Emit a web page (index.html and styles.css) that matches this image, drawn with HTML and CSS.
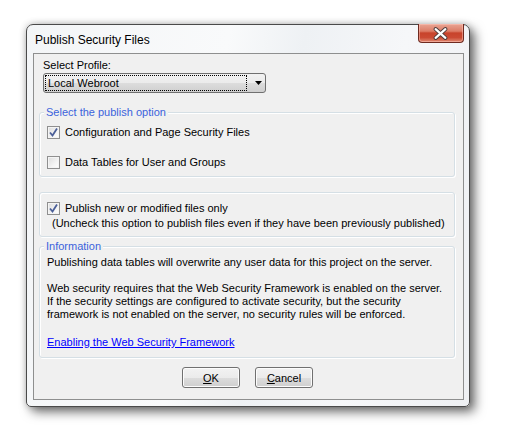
FILE: index.html
```html
<!DOCTYPE html>
<html>
<head>
<meta charset="utf-8">
<link rel="stylesheet" href="styles.css">
</head>
<body>
<div class="desktop">
  <div class="window">
    <div class="titlebar">
      <span class="title">Publish Security Files</span>
      <div class="close">
        <svg width="46" height="19" viewBox="0 0 46 19">
          <path d="M18 5 L28 14 M28 5 L18 14" stroke="#4a3a3a" stroke-width="4.2" stroke-linecap="round"/>
          <path d="M18 5 L28 14 M28 5 L18 14" stroke="#ffffff" stroke-width="2.2" stroke-linecap="round"/>
        </svg>
      </div>
    </div>
    <div class="client">
      <div class="label">Select Profile:</div>
      <div class="combo">
        <span class="combo-text">Local Webroot</span>
        <svg class="combo-arrow" width="7" height="4" viewBox="0 0 7 4"><path d="M0 0 H7 L3.5 4 Z" fill="#000"/></svg>
      </div>

      <div class="group g1">
        <div class="legend">Select the publish option</div>
        <div class="check-row r1">
          <span class="checkbox checked">
            <svg width="11" height="11" viewBox="0 0 11 11"><path d="M2 5.5 L4.5 8.5 L9 1.5" stroke="#4b5f98" stroke-width="1.8" fill="none"/></svg>
          </span>
          <span>Configuration and Page Security Files</span>
        </div>
        <div class="check-row r2">
          <span class="checkbox"></span>
          <span>Data Tables for User and Groups</span>
        </div>
      </div>

      <div class="group g2">
        <div class="check-row r3">
          <span class="checkbox checked">
            <svg width="11" height="11" viewBox="0 0 11 11"><path d="M2 5.5 L4.5 8.5 L9 1.5" stroke="#4b5f98" stroke-width="1.8" fill="none"/></svg>
          </span>
          <span>Publish new or modified files only</span>
        </div>
        <div class="note">(Uncheck this option to publish files even if they have been previously published)</div>
      </div>

      <div class="group g3">
        <div class="legend">Information</div>
        <p class="info">Publishing data tables will overwrite any user data for this project on the server.<br><br>Web security requires that the Web Security Framework is enabled on the server.<br>If the security settings are configured to activate security, but the security<br>framework is not enabled on the server, no security rules will be enforced.</p>
        <a class="link" href="#">Enabling the Web Security Framework</a>
      </div>

      <div class="buttons">
        <button class="btn"><u>O</u>K</button>
        <button class="btn"><u>C</u>ancel</button>
      </div>
    </div>
  </div>
</div>
</body>
</html>
```

FILE: styles.css
```css
html, body {
  margin: 0;
  padding: 0;
  background: #ffffff;
}
.desktop {
  width: 506px;
  height: 434px;
  padding: 24px 0 0 26px;
  box-sizing: border-box;
}
.window {
  position: relative;
  width: 444px;
  height: 383px;
  box-sizing: border-box;
  border: 1px solid #4a4a4a;
  border-radius: 7px 7px 5px 5px;
  background: linear-gradient(100deg, #f3f5f7 0%, #f9fafb 40%, #eef1f4 55%, #f6f7f9 75%, #eef0f3 100%);
  box-shadow: 5px 5px 11px rgba(0,0,0,0.55), 0 0 7px rgba(0,0,0,0.22);
  display: flex;
  flex-direction: column;
  font-family: "Liberation Sans", Arial, sans-serif;
  font-size: 11px;
  color: #000;
}
.titlebar {
  height: 28px;
  display: flex;
  align-items: center;
  padding-left: 8px;
}
.title {
  font-family: "Liberation Sans", Arial, sans-serif;
  font-size: 12px;
  color: #000;
  padding-top: 1px;
}
.close {
  position: absolute;
  top: -1px;
  right: 5px;
  width: 46px;
  height: 19px;
  box-sizing: border-box;
  border: 1px solid #6e2a20;
  border-top: none;
  border-radius: 0 0 4px 4px;
  background: linear-gradient(#e9a594 0%, #dc7c66 40%, #c8432b 50%, #cb4a33 75%, #e08a72 100%);
  box-shadow: inset 0 0 0 1px rgba(255,200,190,0.5);
  display: flex;
}
.close svg {
  margin-left: -1px;
}
.client {
  margin: 0 5px 6px 6px;
  flex: 1;
  border: 1px solid #8e8f8f;
  background: #f0f0f0;
  display: flex;
  flex-direction: column;
  padding: 4px 0 0 0;
}
.label {
  line-height: 14px;
  padding-left: 9px;
}
.combo {
  margin: 1px 0 0 9px;
  width: 223px;
  height: 20px;
  box-sizing: border-box;
  border: 1px solid #707070;
  border-radius: 3px;
  background: linear-gradient(#f2f2f2 0%, #ebebeb 50%, #dddddd 50%, #cfcfcf 100%);
  display: flex;
  align-items: center;
  position: relative;
}
.combo-text {
  margin-left: 1px;
  width: 202px;
  height: 16px;
  box-sizing: border-box;
  border: 1px dotted #000;
  line-height: 14px;
  padding-left: 2px;
}
.combo-arrow {
  margin-left: 8px;
}
.group {
  margin-left: 5px;
  width: 416px;
  box-sizing: border-box;
  border: 1px solid #d5dfe5;
  border-radius: 3px;
  box-shadow: inset 1px 1px 0 #ffffff, 1px 1px 0 #ffffff;
  display: flex;
  flex-direction: column;
}
.legend {
  margin: -8px 0 0 4px;
  padding: 0 2px;
  align-self: flex-start;
  background: #f0f0f0;
  color: #3b63dc;
  line-height: 14px;
}
.g1 {
  margin-top: 19px;
  padding-bottom: 7px;
}
.check-row {
  display: flex;
  align-items: center;
  gap: 5px;
  height: 13px;
  padding-left: 7px;
  line-height: 13px;
}
.r1 { margin-top: 7px; }
.r2 { margin-top: 17px; }
.checkbox {
  width: 13px;
  height: 13px;
  box-sizing: border-box;
  border: 1px solid #8f8f8f;
  background: linear-gradient(135deg, #dcdcdc 0%, #f4f4f4 60%, #ffffff 100%);
  box-shadow: inset 0 0 0 1px #f4f4f4;
  display: flex;
  align-items: center;
  justify-content: center;
  flex: none;
}
.g2 {
  margin-top: 15px;
  padding: 9px 0 6px 0;
}
.note {
  padding-left: 12px;
  margin-top: 1px;
  line-height: 14px;
}
.g3 {
  margin-top: 9px;
  padding-bottom: 8px;
}
.info {
  margin: 3px 0 0 0;
  padding-left: 7px;
  line-height: 13px;
}
.link {
  margin: 15px 0 0 7px;
  align-self: flex-start;
  color: #0000ff;
  line-height: 13px;
  text-decoration: underline;
}
.buttons {
  margin-top: 9px;
  display: flex;
  justify-content: center;
  gap: 15px;
  padding-right: 2px;
}
.btn {
  width: 58px;
  height: 21px;
  box-sizing: border-box;
  border: 1px solid #707070;
  border-radius: 3px;
  background: linear-gradient(#f2f2f2 0%, #ebebeb 50%, #dddddd 50%, #cfcfcf 100%);
  box-shadow: inset 0 0 0 1px #fcfcfc;
  font-family: "Liberation Sans", Arial, sans-serif;
  font-size: 11px;
  color: #000;
  padding: 0;
}
```
